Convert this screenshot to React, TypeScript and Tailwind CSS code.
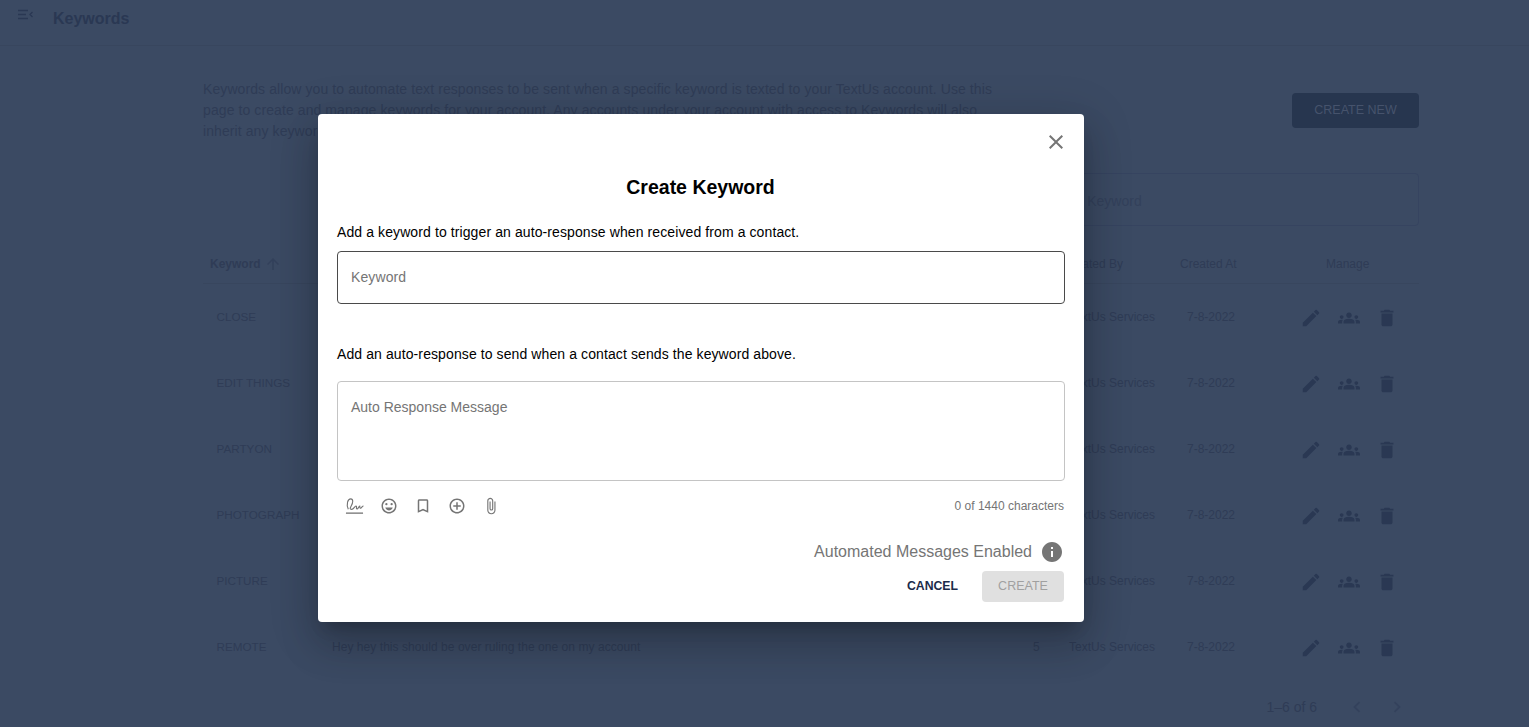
import React from 'react';
import {
  MdArrowUpward,
  MdAttachFile,
  MdBookmarkBorder,
  MdChevronLeft,
  MdChevronRight,
  MdClose,
  MdDelete,
  MdEdit,
  MdGroups,
  MdInfo,
  MdOutlineAddCircleOutline,
  MdOutlineEmojiEmotions,
} from 'react-icons/md';

type Keyword = { name: string; message?: string; count?: number };

const keywords: Keyword[] = [
  { name: 'CLOSE' },
  { name: 'EDIT THINGS' },
  { name: 'PARTYON' },
  { name: 'PHOTOGRAPH' },
  { name: 'PICTURE' },
  { name: 'REMOTE', message: 'Hey hey this should be over ruling the one on my account', count: 5 },
];

const COLS = 'grid grid-cols-[122px_705px_32px_108px_110px_139px] items-center';

const MenuOpenIcon = () => (
  <svg viewBox="0 0 15 11" className="h-[11px] w-[15px]" fill="none" stroke="currentColor" strokeWidth="1.300">
    <path d="M0 1.500h10M0 5.500h8M0 9.500h10M14.500 3 12 5.500l2.500 2.500" />
  </svg>
);

const SignatureIcon = () => (
  <svg viewBox="0 0 20 18" className="h-[18px] w-[19px]" fill="none" stroke="#757575" strokeWidth="1.200">
    <path d="M1 16.500h18" strokeWidth="1.400" />
    <path d="M3.500 12.500C1 7 3 1.500 6 1.500 9 1.500 8.500 6 6.500 9c-1 2-2 3.500.5 3.500s3-3.500 4.500-3.500c1.500 0-.5 3.500 1.500 3 1-.3 1.500-3 2.500-3 0 2 .5 3 1.500 2s1.500-2 2.500-2" />
  </svg>
);

const KeywordRow: React.FC<{ row: Keyword }> = ({ row }) => (
  <div className={`${COLS} h-[66px] text-[12px] text-[#2f3c56]`}>
    <span className="pl-[13.500px] text-[11.700px]">{row.name}</span>
    <span className="pl-[7px] tracking-[0.05px]">{row.message}</span>
    <span className="pl-[3px]">{row.count}</span>
    <span className="pl-[7px]">TextUs Services</span>
    <span className="pl-[17px]">7-8-2022</span>
    <div className="flex items-center gap-[16px] pt-[2px] pl-[20px] text-[#2a3853]">
      <MdEdit size={22} />
      <MdGroups size={22} />
      <MdDelete size={22} />
    </div>
  </div>
);

const CreateKeywordModal = () => (
  <div className="absolute left-[318px] top-[114px] flex h-[508px] w-[766px] flex-col rounded-[4px] bg-white pr-[20px] pl-[19px] tracking-[0.1px] text-black shadow-[0_11px_15px_-7px_rgba(0,0,0,0.2),0_24px_38px_3px_rgba(0,0,0,0.14),0_9px_46px_8px_rgba(0,0,0,0.12)]">
    <div className="flex h-[40px] items-end justify-end">
      <MdClose size={24} className="-mr-[4px] text-[#757575]" />
    </div>
    <h2 className="mt-[19px] text-center text-[19.500px] leading-[28px] font-bold tracking-normal">Create Keyword</h2>
    <p className="mt-[21px] text-[14px] leading-[20px]">Add a keyword to trigger an auto-response when received from a contact.</p>
    <div className="mt-[9px] -mr-px flex h-[53px] items-center rounded-[4px] border border-[#4a4a4a] px-[13px] text-[14px] text-[#757575]">
      Keyword
    </div>
    <p className="mt-[40px] text-[14px] leading-[20px]">Add an auto-response to send when a contact sends the keyword above.</p>
    <div className="mt-[17px] -mr-px h-[100px] rounded-[4px] border border-[#c4c4c4] px-[13px] pt-[15px] text-[14px] leading-[20px] tracking-normal text-[#757575]">
      Auto Response Message
    </div>
    <div className="mt-[14px] flex h-[22px] items-center justify-between">
      <div className="flex items-center gap-[16px] pl-[8px] text-[#757575]">
        <SignatureIcon />
        <MdOutlineEmojiEmotions size={18} />
        <MdBookmarkBorder size={18} />
        <MdOutlineAddCircleOutline size={18} />
        <MdAttachFile size={18} />
      </div>
      <span className="text-[12px] tracking-normal text-[#757575]">0 of 1440 characters</span>
    </div>
    <div className="mt-[23px] flex items-center justify-end gap-[8px] text-[16px] tracking-normal text-[#757575]">
      <span>Automated Messages Enabled</span>
      <MdInfo size={24} />
    </div>
    <div className="mt-[7px] flex items-center justify-end tracking-normal">
      <span className="text-[12.250px] font-bold text-[#1c2b4a]">CANCEL</span>
      <span className="ml-[24px] flex h-[31px] w-[82px] items-center justify-center rounded-[4px] bg-[#e0e0e0] text-[12.500px] text-[#a0a0a0]">
        CREATE
      </span>
    </div>
  </div>
);

export default function App() {
  return (
    <div className="relative h-[727px] w-[1529px] overflow-hidden bg-[#3b4a63] font-['Liberation_Sans',sans-serif] text-[#2f3c56]">
      <header className="flex h-[46px] items-center border-b border-[#38465e]">
        <div className="mb-[16px] ml-[18px] text-[#2a3853]">
          <MenuOpenIcon />
        </div>
        <h1 className="mb-[7px] ml-[20px] text-[16px] font-bold text-[#2a3853]">Keywords</h1>
      </header>

      <main className="pr-[110px] pl-[203px]">
        <div className="mt-[33px] flex items-start justify-between">
          <p className="w-[810px] text-[14px] leading-[21px] tracking-[0.09px]">
            Keywords allow you to automate text responses to be sent when a specific keyword is texted to your TextUs
            account. Use this page to create and manage keywords for your account. Any accounts under your account with
            access to Keywords will also inherit any keywords created on this account.
          </p>
          <button className="mt-[14px] h-[35px] w-[127px] rounded-[4px] bg-[#27364f] text-[12.500px] text-[#46536c]">
            CREATE NEW
          </button>
        </div>

        <div className="mt-[31px] flex justify-end">
          <div className="flex h-[53px] w-[391px] items-center rounded-[4px] border border-[#364460] pt-[3px] pl-[10px] text-[14px] text-[#33415b]">
            Search Keyword
          </div>
        </div>

        <div className={`${COLS} mt-[18px] h-[40px] border-b border-[#38465e] text-[12px]`}>
          <span className="flex items-center gap-[3px] pl-[7px] font-bold">
            Keyword <MdArrowUpward size={18} className="text-[#33415b]" />
          </span>
          <span>Message</span>
          <span />
          <span className="pl-[1px]">Created By</span>
          <span className="pl-[10px]">Created At</span>
          <span className="pl-[46px]">Manage</span>
        </div>

        {keywords.map((row) => (
          <KeywordRow key={row.name} row={row} />
        ))}

        <div className="mt-[16px] flex items-center justify-end pr-[11px] text-[14px]">
          <span>1–6 of 6</span>
          <MdChevronLeft size={22} className="ml-[29px] text-[#34425c]" />
          <MdChevronRight size={22} className="ml-[18px] text-[#34425c]" />
        </div>
      </main>

      <CreateKeywordModal />
    </div>
  );
}
